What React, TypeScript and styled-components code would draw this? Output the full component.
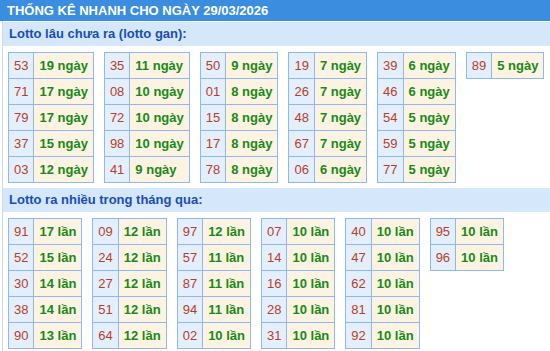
import React from "react";
import styled, { createGlobalStyle } from "styled-components";

const Global = createGlobalStyle`
  html, body { margin: 0; padding: 0; background: #ffffff; }
  body { font-family: "Liberation Sans", Arial, sans-serif; width: 550px; overflow: hidden; }
`;

const Page = styled.div`
  width: 560px;
`;

const Header = styled.div`
  height: 21px;
  background: #3b8de0;
  color: #ffffff;
  font-weight: bold;
  font-size: 13px;
  line-height: 21px;
  padding-left: 7px;
  white-space: nowrap;
`;

const Body = styled.div`
  margin-left: 2px;
  border-left: 1px solid #c8dcf3;
  padding-top: 1px;
`;

const SectionTitle = styled.div`
  height: 24px;
  background: #d4e7fb;
  color: #1a4db5;
  font-weight: bold;
  font-size: 13px;
  line-height: 24px;
  padding-left: 6px;
`;

const TableRow = styled.div`
  display: flex;
  align-items: flex-start;
  gap: 10px;
  padding: 6px 0 5px 5px;
`;

const Table = styled.table`
  border-collapse: collapse;
  font-size: 13px;
`;

const NumCell = styled.td`
  border: 1px solid #8fb7f3;
  background: #e3effd;
  color: #b8401f;
  height: 25px;
  padding: 0 5px;
  text-align: center;
`;

const ValCell = styled.td`
  border: 1px solid #8fb7f3;
  background: #fdf3e2;
  color: #178a17;
  font-weight: bold;
  height: 25px;
  padding: 0 5px;
  white-space: nowrap;
`;

type Item = [string, string];

const gan: Item[][] = [
  [["53", "19 ngày"], ["71", "17 ngày"], ["79", "17 ngày"], ["37", "15 ngày"], ["03", "12 ngày"]],
  [["35", "11 ngày"], ["08", "10 ngày"], ["72", "10 ngày"], ["98", "10 ngày"], ["41", "9 ngày"]],
  [["50", "9 ngày"], ["01", "8 ngày"], ["15", "8 ngày"], ["17", "8 ngày"], ["78", "8 ngày"]],
  [["19", "7 ngày"], ["26", "7 ngày"], ["48", "7 ngày"], ["67", "7 ngày"], ["06", "6 ngày"]],
  [["39", "6 ngày"], ["46", "6 ngày"], ["54", "5 ngày"], ["59", "5 ngày"], ["77", "5 ngày"]],
  [["89", "5 ngày"]],
];

const nhieu: Item[][] = [
  [["91", "17 lần"], ["52", "15 lần"], ["30", "14 lần"], ["38", "14 lần"], ["90", "13 lần"]],
  [["09", "12 lần"], ["24", "12 lần"], ["27", "12 lần"], ["51", "12 lần"], ["64", "12 lần"]],
  [["97", "12 lần"], ["57", "11 lần"], ["87", "11 lần"], ["94", "11 lần"], ["02", "10 lần"]],
  [["07", "10 lần"], ["14", "10 lần"], ["16", "10 lần"], ["28", "10 lần"], ["31", "10 lần"]],
  [["40", "10 lần"], ["47", "10 lần"], ["62", "10 lần"], ["81", "10 lần"], ["92", "10 lần"]],
  [["95", "10 lần"], ["96", "10 lần"]],
];

const StatTable = ({ items }: { items: Item[] }) => (
  <Table>
    <tbody>
      {items.map(([n, v]) => (
        <tr key={n}>
          <NumCell>{n}</NumCell>
          <ValCell>{v}</ValCell>
        </tr>
      ))}
    </tbody>
  </Table>
);

export default function App() {
  return (
    <Page>
      <Global />
      <Header>THỐNG KÊ NHANH CHO NGÀY 29/03/2026</Header>
      <Body>
        <SectionTitle>Lotto lâu chưa ra (lotto gan):</SectionTitle>
        <TableRow>
          {gan.map((g, i) => (
            <StatTable key={i} items={g} />
          ))}
        </TableRow>
        <SectionTitle>Lotto ra nhiều trong tháng qua:</SectionTitle>
        <TableRow>
          {nhieu.map((g, i) => (
            <StatTable key={i} items={g} />
          ))}
        </TableRow>
      </Body>
    </Page>
  );
}
